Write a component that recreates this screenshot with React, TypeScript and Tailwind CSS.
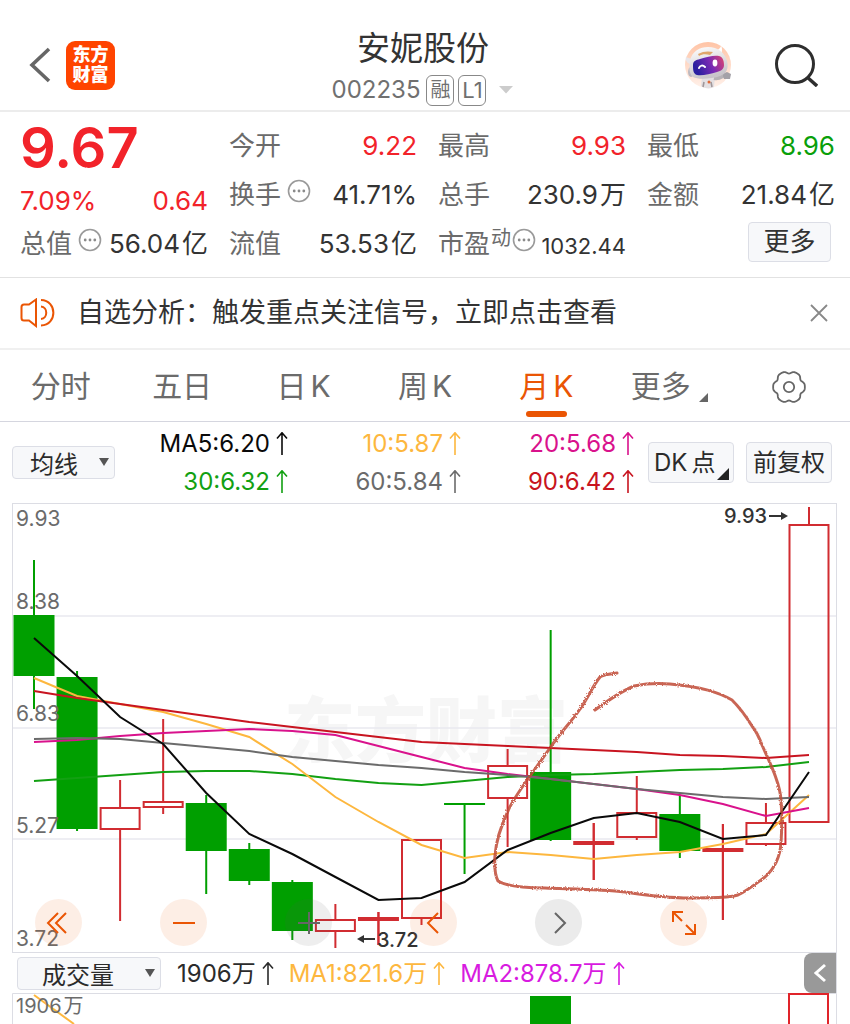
import clsx from "clsx";
import type { ReactNode } from "react";

type Tone = "up" | "down" | "plain";

interface Candle {
  kind: "fall" | "rise" | "flat";
  top: number;
  bottom: number;
  high: number;
  low: number;
}

interface QuoteProps {
  label: ReactNode;
  value: string;
  unit?: string;
  tone?: Tone;
  small?: boolean;
}

interface AverageProps {
  text: string;
  className: string;
}

interface PickerProps {
  id: string;
  label: string;
  options: string[];
  className: string;
}

interface RoundButtonProps {
  label: string;
  className: string;
  children: ReactNode;
}

const FIRST_X = 22;
const LAST_X = 797;

const candles: Candle[] = [
  { kind: "fall", top: 112, bottom: 173, high: 57, low: 206 },
  { kind: "fall", top: 174, bottom: 326, high: 168, low: 328 },
  { kind: "rise", top: 305, bottom: 326, high: 277, low: 418 },
  { kind: "rise", top: 299, bottom: 304, high: 216, low: 311 },
  { kind: "fall", top: 300, bottom: 348, high: 292, low: 391 },
  { kind: "fall", top: 346, bottom: 378, high: 340, low: 382 },
  { kind: "fall", top: 379, bottom: 428, high: 377, low: 437 },
  { kind: "rise", top: 417, bottom: 428, high: 401, low: 445 },
  { kind: "flat", top: 414, bottom: 418, high: 409, low: 442 },
  { kind: "rise", top: 337, bottom: 415, high: 336, low: 422 },
  { kind: "fall", top: 300, bottom: 302, high: 301, low: 371 },
  { kind: "rise", top: 263, bottom: 295, high: 246, low: 344 },
  { kind: "fall", top: 269, bottom: 337, high: 127, low: 338 },
  { kind: "flat", top: 338, bottom: 342, high: 320, low: 377 },
  { kind: "rise", top: 310, bottom: 334, high: 273, low: 337 },
  { kind: "fall", top: 311, bottom: 348, high: 292, low: 355 },
  { kind: "flat", top: 345, bottom: 349, high: 321, low: 417 },
  { kind: "rise", top: 320, bottom: 341, high: 300, low: 343 },
  { kind: "rise", top: 22, bottom: 319, high: 4, low: 319 },
];

const averages = [
  {
    color: "#12a012",
    ys: [278, 275, 272, 269, 268, 268, 271, 276, 280, 282, 278, 274, 272, 271, 269, 267, 266, 264, 259],
  },
  {
    color: "#fdb73e",
    ys: [175, 193, 201, 209, 221, 234, 261, 294, 319, 342, 355, 349, 352, 356, 352, 349, 341, 331, 292],
  },
  {
    color: "#d9128c",
    ys: [239, 237, 233, 230, 228, 226, 228, 232, 243, 254, 265, 271, 276, 281, 286, 292, 301, 313, 305],
  },
  {
    color: "#6b6b6b",
    ys: [236, 235, 236, 240, 244, 248, 254, 258, 262, 265, 269, 272, 276, 281, 286, 290, 294, 296, 294],
  },
  {
    color: "#c81420",
    ys: [188, 195, 201, 207, 213, 219, 224, 229, 234, 239, 241, 243, 245, 247, 249, 252, 253, 255, 252],
  },
  {
    color: "#0a0a0a",
    ys: [135, 173, 214, 241, 290, 331, 351, 374, 397, 395, 379, 347, 330, 315, 310, 319, 336, 332, 269],
  },
];

const axisLabels = [
  { text: "9.93", y: 23 },
  { text: "8.38", y: 106 },
  { text: "6.83", y: 218 },
  { text: "5.27", y: 330 },
  { text: "3.72", y: 443 },
];

const candleX = (index: number) =>
  FIRST_X + (index * (LAST_X - FIRST_X)) / (candles.length - 1);

const toPoints = (ys: number[]) =>
  ys.map((y, index) => `${candleX(index)},${y}`).join(" ");

// six wide teeth with narrow notches between them
const gearPoints = Array.from({ length: 120 }, (_, i) => {
  const angle = (i / 120) * Math.PI * 2;
  const radius =
    15 + 1.2 * Math.cos(angle * 6) - 0.35 * Math.cos(angle * 12);
  return `${17 + radius * Math.cos(angle)},${17 + radius * Math.sin(angle)}`;
}).join(" ");

const InfoDots = () => (
  <svg className="mb-2 size-6 shrink-0" viewBox="0 0 24 24" fill="none">
    <circle cx="12" cy="12" r="10.5" stroke="#9a9a9a" strokeWidth="1.6" />
    <circle cx="7.2" cy="12" r="1.4" fill="#8a8a8a" />
    <circle cx="12" cy="12" r="1.4" fill="#8a8a8a" />
    <circle cx="16.8" cy="12" r="1.4" fill="#8a8a8a" />
  </svg>
);

const UpArrow = () => (
  <svg
    className="h-6 w-3 shrink-0"
    viewBox="0 0 12 24"
    fill="none"
    stroke="currentColor"
    strokeWidth="1.6"
  >
    <path d="M6 23V1M1 6.5L6 0.8L11 6.5" />
  </svg>
);

const Robot = () => (
  <svg className="size-12" viewBox="0 0 48 48">
    <defs>
      <linearGradient id="halo" x1="0" y1="0" x2="0" y2="1">
        <stop offset="0" stopColor="#ffc4a6" />
        <stop offset="1" stopColor="#fff1ea" />
      </linearGradient>
      <linearGradient id="visor" x1="0" y1="0.3" x2="1" y2="0">
        <stop offset="0" stopColor="#2b1fa0" />
        <stop offset="0.5" stopColor="#7a2bb4" />
        <stop offset="1" stopColor="#e2446c" />
      </linearGradient>
      <linearGradient id="shell" x1="0" y1="0" x2="0.3" y2="1">
        <stop offset="0" stopColor="#ffffff" />
        <stop offset="1" stopColor="#c9c5ca" />
      </linearGradient>
    </defs>
    <circle cx="24" cy="24" r="23" fill="url(#halo)" />
    <path d="M2 16C3 17 6 17 8 18L6 23C3 22 1 19 2 16Z" fill="#e9e6ea" />
    <path d="M30 9C34 10 37 7 37 4C39 9 38 13 35 15Z" fill="#fff" />
    <path d="M18 36L17 45C21 48 27 48 30 46L31 35Z" fill="#e4e0e2" />
    <path d="M20 41L19 46M27 41L28 46" stroke="#a0979a" strokeWidth="1.6" />
    <circle cx="25" cy="41" r="1.5" fill="#e06a3a" />
    <path d="M30 37C35 38 37 36 39 35" stroke="#b6b2b6" strokeWidth="4" />
    <path d="M38 33L43 31L47 33L46 38L40 38Z" fill="#a4a1a7" />
    <ellipse cx="7" cy="31" rx="3" ry="5" fill="#bdb9c0" />
    <path
      d="M6 20C8 10 16 6 24 6C34 6 41 12 43 20C45 28 42 33 36 35C28 38 14 39 9 36C5 33 5 26 6 20Z"
      fill="url(#shell)"
    />
    <path d="M14 13C19 10 25 10 29 11L26 14C22 13 18 13 15 15Z" fill="#dfa66b" />
    <path
      d="M9 24C9 20 12 19 16 18C23 16 30 14 35 15C39 16 40 20 40 24C40 28 37 30 33 31C26 33 18 35 13 34C9 33 9 28 9 24Z"
      fill="url(#visor)"
    />
    <path
      d="M15 27C16 24 19 24 21 26"
      stroke="#fff"
      strokeWidth="2"
      fill="none"
      strokeLinecap="round"
    />
    <ellipse cx="31" cy="22" rx="2.4" ry="3.4" fill="#fff" />
  </svg>
);

const Header = () => (
  <header className="flex h-28 items-center border-b-2 border-[#ececec] pt-5 pr-8 pl-7">
    <div className="flex flex-1 items-center gap-3.5">
      <button aria-label="返回">
        <svg
          className="h-9 w-6"
          viewBox="0 0 24 36"
          fill="none"
          stroke="#666"
          strokeWidth="3.6"
        >
          <path d="M21 2L4 18L21 34" />
        </svg>
      </button>
      <a
        href="#"
        className="flex size-[49px] flex-col items-center justify-center rounded-[9px] bg-[#ff4400] text-lg leading-5 font-black text-white"
      >
        <span>东方</span>
        <span>财富</span>
      </a>
    </div>
    <div className="flex flex-col items-center pt-2">
      <h1 className="text-[33px] leading-[42px] text-[#333]">安妮股份</h1>
      <button className="flex h-[42px] items-center text-[#707070]">
        <span className="mr-1.5 text-2xl">002235</span>
        <span className="mr-1 flex h-[31px] w-7 items-center justify-center rounded-md border border-[#888] text-xl">
          融
        </span>
        <span className="mr-3 flex h-[31px] w-7 items-center justify-center rounded-md border border-[#888] text-[22px]">
          L1
        </span>
        <svg className="h-2 w-4" viewBox="0 0 16 8" fill="#ccc">
          <path d="M1 0H15L8 7.5Z" />
        </svg>
      </button>
    </div>
    <div className="flex flex-1 items-center justify-end gap-[42px]">
      <button aria-label="智能助手">
        <Robot />
      </button>
      <button aria-label="搜索">
        <svg
          className="size-11"
          viewBox="0 0 44 44"
          fill="none"
          stroke="#2e2e2e"
          strokeWidth="3"
        >
          <circle cx="21" cy="21" r="18.5" />
          <path d="M33 34L43 43" strokeWidth="3.4" />
        </svg>
      </button>
    </div>
  </header>
);

const Quote: React.FC<QuoteProps> = ({ label, value, unit, tone, small }) => (
  <div className="flex h-[49px] items-center justify-between">
    <span className="flex items-center whitespace-nowrap text-[#6b6b6b]">
      {label}
    </span>
    <span
      className={clsx(
        "flex items-center gap-0.5 whitespace-nowrap",
        small && "pt-1 text-[22px]",
        tone === "up" && "text-[#f2232a]",
        tone === "down" && "text-[#0a9f0a]",
        !tone && "text-[#333]",
      )}
    >
      {value}
      {unit && <span>{unit}</span>}
    </span>
  </div>
);

const QuotePanel = () => (
  <section className="grid grid-cols-4 gap-x-[21px] border-b border-[#e2e2e2] pt-[9px] pr-[15px] pb-[9px] pl-5 text-[26px] leading-9">
    <div className="row-span-2 flex flex-col justify-between text-[#f2232a]">
      <strong className="text-[56px] leading-[54px] font-semibold">9.67</strong>
      <div className="flex justify-between">
        <span>7.09%</span>
        <span>0.64</span>
      </div>
    </div>
    <Quote label="今开" value="9.22" tone="up" />
    <Quote label="最高" value="9.93" tone="up" />
    <Quote label="最低" value="8.96" tone="down" />
    <Quote
      label={
        <>
          <span className="mr-1.5">换手</span>
          <InfoDots />
        </>
      }
      value="41.71%"
    />
    <Quote label="总手" value="230.9" unit="万" />
    <Quote label="金额" value="21.84" unit="亿" />
    <Quote
      label={
        <>
          <span className="mr-1.5">总值</span>
          <InfoDots />
        </>
      }
      value="56.04"
      unit="亿"
    />
    <Quote label="流值" value="53.53" unit="亿" />
    <Quote
      label={
        <>
          市盈
          <span className="mx-px mb-3 text-xl leading-5">动</span>
          <InfoDots />
        </>
      }
      value="1032.44"
      small
    />
    <div className="flex items-center justify-end pr-1">
      <button className="mb-1 h-10 w-[83px] rounded-sm border border-[#dcdee6] bg-[#f7f8fa] text-[#333]">
        更多
      </button>
    </div>
  </section>
);

const Notice = () => (
  <section className="flex h-[72px] items-center border-b-2 border-[#f0f0f0] pr-[22px] pl-5">
    <svg
      className="mr-[21px] h-[30px] w-9"
      viewBox="0 0 36 30"
      fill="none"
      stroke="#ea5504"
      strokeWidth="2"
    >
      <path d="M16 1.5L9 6.5H4C2.500 6.500 1.500 7.500 1.500 9V20C1.500 21.500 2.500 22.500 4 22.500H9L16 28Z" />
      <path d="M21 8.500C28 9 28 20.500 21 21M21 2C37.500 2.500 37.500 27 21 27.500" />
    </svg>
    <a href="#" className="flex-1 text-[27px] whitespace-nowrap text-[#333]">
      自选分析：触发重点关注信号，立即点击查看
    </a>
    <button aria-label="关闭">
      <svg
        className="size-[18px]"
        viewBox="0 0 18 18"
        stroke="#888"
        strokeWidth="1.8"
      >
        <path d="M1 1L17 17M17 1L1 17" />
      </svg>
    </button>
  </section>
);

const periods = ["分时", "五日", "日K", "周K", "月K"];

const PeriodTabs = () => (
  <nav className="grid h-[72px] grid-cols-7 border-b border-[#d5d6df] pt-0.5 text-[30px] text-[#6b6b6b]">
    {periods.map((period) => {
      const active = period === "月K";
      return (
        <button
          key={period}
          className={clsx(
            "relative flex items-center justify-center",
            active && "text-[#ea5504]",
          )}
        >
          {period.endsWith("K") ? (
            <>
              {period[0]}
              <span className="ml-1">K</span>
            </>
          ) : (
            period
          )}
          {active && (
            <span className="absolute bottom-1 h-1.5 w-[41px] rounded-full bg-[#ea5504]" />
          )}
        </button>
      );
    })}
    <button className="flex items-center justify-center gap-2 pl-1">
      更多
      <svg className="mt-5 size-2.5" viewBox="0 0 10 10" fill="#666">
        <path d="M9 1V10H0Z" />
      </svg>
    </button>
    <button aria-label="设置" className="flex items-center justify-center">
      <svg
        className="size-[34px]"
        viewBox="0 0 34 34"
        fill="none"
        stroke="#666"
        strokeWidth="1.8"
      >
        <polygon points={gearPoints} />
        <circle cx="17" cy="17" r="5.2" />
      </svg>
    </button>
  </nav>
);

const Picker: React.FC<PickerProps> = ({ id, label, options, className }) => (
  <div className="relative flex shrink-0">
    <label htmlFor={id} className="sr-only">
      {label}
    </label>
    <select
      id={id}
      className={clsx(
        "h-[33px] appearance-none rounded-sm border border-[#dcdee6] bg-[#f7f8fa] py-0 font-['Noto_Sans_CJK_SC',sans-serif] text-2xl leading-[31px] text-[#2b2b2b]",
        className,
      )}
    >
      {options.map((option) => (
        <option key={option}>{option}</option>
      ))}
    </select>
    <svg
      className="pointer-events-none absolute top-3 right-1.5 h-2 w-2.5"
      viewBox="0 0 10 8"
      fill="#555"
    >
      <path d="M0 0H10L5 8Z" />
    </svg>
  </div>
);

const Average: React.FC<AverageProps> = ({ text, className }) => (
  <span
    className={clsx(
      "flex items-center justify-end gap-1.5 whitespace-nowrap",
      className,
    )}
  >
    {text}
    <UpArrow />
  </span>
);

const IndicatorBar = () => (
  <section className="flex h-[81px] items-center pr-[18px] pl-3">
    <Picker
      id="overlay"
      label="主图指标"
      options={["均线", "BOLL"]}
      className="w-[103px] pl-[17px]"
    />
    <div className="grid flex-1 grid-cols-3 text-2xl leading-[38px]">
      <Average text="MA5:6.20" className="text-[#0a0a0a]" />
      <Average text="10:5.87" className="text-[#fdb73e]" />
      <Average text="20:5.68" className="text-[#d9128c]" />
      <Average text="30:6.32" className="text-[#12a012]" />
      <Average text="60:5.84" className="text-[#6b6b6b]" />
      <Average text="90:6.42" className="text-[#c81420]" />
    </div>
    <button className="relative ml-3.5 flex h-[41px] w-[86px] items-center gap-1 rounded-sm border border-[#dcdee6] bg-[#f7f8fa] pl-[5px] text-2xl text-[#2b2b2b]">
      DK<span>点</span>
      <svg
        className="absolute right-1 bottom-0.5 size-3"
        viewBox="0 0 12 12"
        fill="#222"
      >
        <path d="M12 0V12H0Z" />
      </svg>
    </button>
    <button className="ml-3 h-[41px] w-[86px] rounded-sm border border-[#dcdee6] bg-[#f7f8fa] text-2xl whitespace-nowrap text-[#2b2b2b]">
      前复权
    </button>
  </section>
);

const CandleShape = ({ candle, x }: { candle: Candle; x: number }) => {
  const { kind, top, bottom, high, low } = candle;
  const color = kind === "fall" ? "#009f00" : "#d12c31";
  const hollow = kind === "rise";

  return (
    <g stroke={color} strokeWidth="2">
      <path d={`M${x} ${high}V${top}M${x} ${bottom}V${low}`} />
      {kind === "flat" && <path d={`M${x} ${high}V${low}`} />}
      <rect
        x={hollow ? x - 19.5 : x - 20.5}
        y={top}
        width={hollow ? 39 : 41}
        height={bottom - top}
        fill={hollow ? "none" : color}
        stroke={hollow ? color : "none"}
      />
    </g>
  );
};

const RoundButton: React.FC<RoundButtonProps> = ({
  label,
  className,
  children,
}) => (
  <button
    aria-label={label}
    className={clsx(
      "flex size-[47px] items-center justify-center rounded-full",
      className,
    )}
  >
    <svg
      className="size-7"
      viewBox="0 0 28 28"
      fill="none"
      stroke="currentColor"
      strokeWidth="2"
    >
      {children}
    </svg>
  </button>
);

const ChartControls = () => (
  <div className="absolute right-[130px] bottom-[7px] left-[23px] flex justify-between">
    <RoundButton label="最早" className="bg-[#ea5504]/10 text-[#ea5504]">
      <path d="M13 4L3 14L13 24M21 4L11 14L21 24" />
    </RoundButton>
    <RoundButton label="缩小" className="bg-[#ea5504]/10 text-[#ea5504]">
      <path d="M3 14H25" />
    </RoundButton>
    <RoundButton label="放大" className="bg-[#555]/10 text-[#666]">
      <path d="M3 14H25M14 3V25" />
    </RoundButton>
    <RoundButton label="向前" className="bg-[#ea5504]/10 text-[#ea5504]">
      <path d="M18 4L8 14L18 24" />
    </RoundButton>
    <RoundButton label="向后" className="bg-[#ebebeb] text-[#666]">
      <path d="M10 4L20 14L10 24" />
    </RoundButton>
    <RoundButton label="全屏" className="bg-[#ea5504]/10 text-[#ea5504]">
      <path d="M3 13V3H13M3 3L12 12M25 15V25H15M25 25L16 16" />
    </RoundButton>
  </div>
);

const PriceChart = () => (
  <section className="relative">
    <svg className="block w-full" viewBox="0 0 825 450" fill="none">
      <defs>
        <filter id="crayon" x="-5%" y="-5%" width="110%" height="110%">
          <feTurbulence type="fractalNoise" baseFrequency="0.7" numOctaves="2" />
          <feDisplacementMap in="SourceGraphic" scale="3" />
        </filter>
      </defs>
      <text
        x="414"
        y="253"
        fontSize="71"
        fontWeight="900"
        textAnchor="middle"
        fill="#f6f6f6"
      >
        东方财富
      </text>
      <path
        d="M0 113H824M0 225H824M0 336H824"
        stroke="#e9e9f0"
        strokeWidth="1.5"
      />
      <rect x="0.5" y="0.5" width="824" height="449" stroke="#dcdde4" />
      {candles.map((candle, index) => (
        <CandleShape key={index} candle={candle} x={candleX(index)} />
      ))}
      {averages.map(({ color, ys }) => (
        <polyline
          key={color}
          points={toPoints(ys)}
          stroke={color}
          strokeWidth="2"
        />
      ))}
      <g fontSize="21" fill="#6b6b6b">
        {axisLabels.map(({ text, y }) => (
          <text key={text} x="4" y={y}>
            {text}
          </text>
        ))}
      </g>
      <g fontSize="20" fontWeight="500" fill="#333">
        <text x="712" y="20">
          9.93
        </text>
        <text x="365" y="444">
          3.72
        </text>
        <path d="M769 9L776 13L769 17ZM352 432L345 436L352 440Z" />
        <path d="M757 13H770M351 436H363" stroke="#333" strokeWidth="1.8" />
      </g>
      <g
        stroke="#bf4a36"
        strokeOpacity="0.85"
        strokeWidth="3"
        strokeLinecap="round"
        strokeLinejoin="round"
        filter="url(#crayon)"
      >
        <path d="M605 170C597 171 590 172 588 174C580 184 576 195 568 206C560 218 548 230 538 245L518 273C508 287 500 298 496 308C488 325 484 340 483 352C482 365 484 374 486 378C494 383 515 385 533 385C560 386 590 386 613 389C640 393 660 395 678 395C700 394 712 396 726 392C735 388 745 380 753 374C762 366 768 354 769 340C770 325 770 310 769 297C768 280 758 260 750 242C747 234 744 228 740 223C732 210 726 203 720 197C706 189 690 184 658 181C645 180 632 181 622 183C610 188 598 196 583 207" />
      </g>
    </svg>
    <ChartControls />
  </section>
);

const VolumeBar = () => (
  <section className="flex h-10 items-center border-r border-[#dcdde4] pl-[5px] text-2xl">
    <Picker
      id="study"
      label="副图指标"
      options={["成交量", "MACD", "KDJ"]}
      className="w-36 pl-6"
    />
    <div className="ml-4 flex flex-1 gap-[15px] pt-0.5">
      <Average text="1906万" className="text-[#2b2b2b]" />
      <Average text="MA1:821.6万" className="text-[#fdb73e]" />
      <Average text="MA2:878.7万" className="text-[#d81be0]" />
    </div>
    <button
      aria-label="展开"
      className="flex h-full w-8 items-center justify-center rounded-l-lg bg-[#999]"
    >
      <svg
        className="h-5 w-3"
        viewBox="0 0 12 20"
        fill="none"
        stroke="#fff"
        strokeWidth="3"
      >
        <path d="M11 2L2 10L11 18" />
      </svg>
    </button>
  </section>
);

const VolumeChart = () => (
  <section>
    <svg className="block w-full" viewBox="0 0 825 31" fill="none">
      <path d="M0.500 31V0.500H824.500V31" stroke="#dcdde4" />
      <rect x="518" y="3" width="41" height="28" fill="#009f00" />
      <path d="M777 31V1H816V31" stroke="#e0242a" strokeWidth="2" />
      <path d="M22 2L62 31" stroke="#fdb73e" strokeWidth="2" />
      <text x="4" y="20" fontSize="20" fill="#6b6b6b">
        1906
        <tspan dx="2">万</tspan>
      </text>
    </svg>
  </section>
);

export default function App() {
  return (
    <main className="bg-white font-['Inter','Noto_Sans_CJK_SC',sans-serif]">
      <Header />
      <QuotePanel />
      <Notice />
      <PeriodTabs />
      <IndicatorBar />
      <div className="pr-[13px] pl-3">
        <PriceChart />
        <VolumeBar />
        <VolumeChart />
      </div>
    </main>
  );
}
